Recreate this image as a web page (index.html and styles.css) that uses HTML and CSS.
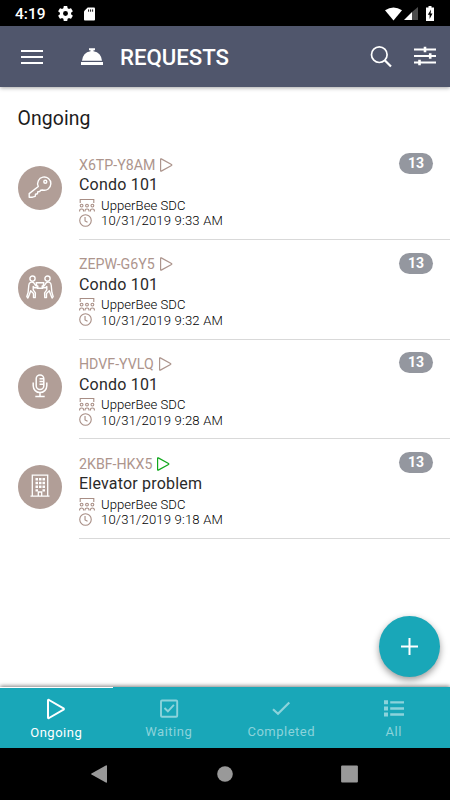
FILE: index.html
```html
<!DOCTYPE html>
<html lang="en">
<head>
    <meta charset="UTF-8">
    <meta name="viewport" content="width=device-width, initial-scale=1.0">
    <title>Requests</title>
    <link rel="stylesheet" href="styles.css">
</head>
<body>

<!-- shared icons -->
<svg class="sprite" aria-hidden="true">
    <symbol id="icon-play" viewBox="0 0 14 14">
        <path d="M1.600 1.300v11.400q0 .7.700.4l10.200-5.600q.7-.5 0-1l-10.200-5.600q-.7-.3-.7.400z" fill="none" stroke="currentColor" stroke-width="1.200"/>
    </symbol>
    <symbol id="icon-group" viewBox="0 0 16 14">
        <g fill="none" stroke="currentColor" stroke-width="1.100">
            <path d="M1.200 5V1.500h13.600V5"/>
            <circle cx="2.600" cy="7.600" r="1.400"/><circle cx="8" cy="7.600" r="1.400"/><circle cx="13.400" cy="7.600" r="1.400"/>
            <path d="M.6 13.500v-.6q0-1.900 2-1.900t2 1.900v.6M6 13.500v-.6q0-1.900 2-1.900t2 1.900v.6M11.400 13.500v-.6q0-1.900 2-1.900t2 1.900v.6"/>
        </g>
    </symbol>
    <symbol id="icon-clock" viewBox="0 0 14 14">
        <g fill="none" stroke="currentColor" stroke-width="1.200"><circle cx="7" cy="7" r="6.200"/><path d="M6.500 3.200v4.300L9.200 9"/></g>
    </symbol>
</svg>

<div class="status-bar">
    <span class="time">4:19</span>
    <svg class="gear" viewBox="2 2 20 20"><path fill="#fff" d="M19.400 13a7.500 7.500 0 0 0 0-2l2.100-1.600a.5.500 0 0 0 .1-.7l-2-3.400a.5.500 0 0 0-.6-.2l-2.500 1a7.500 7.500 0 0 0-1.700-1L14.400 2.400a.5.500 0 0 0-.5-.4h-3.800a.5.500 0 0 0-.5.400l-.4 2.700a7.500 7.500 0 0 0-1.700 1l-2.500-1a.5.500 0 0 0-.6.200l-2 3.400a.5.500 0 0 0 .1.700L4.600 11a7.500 7.500 0 0 0 0 2l-2.100 1.600a.5.500 0 0 0-.1.700l2 3.400c.1.200.4.300.6.200l2.500-1a7.500 7.500 0 0 0 1.700 1l.4 2.700c0 .2.200.4.500.4h3.800c.3 0 .5-.2.500-.4l.4-2.700a7.500 7.500 0 0 0 1.700-1l2.500 1c.2.100.5 0 .6-.2l2-3.400a.5.500 0 0 0-.1-.7zM12 15.300a3.300 3.300 0 1 1 0-6.600 3.300 3.300 0 0 1 0 6.600z"/></svg>
    <svg class="sd" viewBox="0 0 12 14"><path fill="#fff" d="M4 0h7q1 0 1 1v12q0 1-1 1H1q-1 0-1-1V4z"/><path stroke="#000" d="M5 2v2.500M7.200 2v2.500M9.400 2v2.500"/></svg>
    <svg class="wifi" viewBox="0 0 18 14"><path fill="#fff" d="M9 14L0 3Q9-3 18 3z"/></svg>
    <svg class="signal" viewBox="0 0 14 13"><path fill="#fff" d="M0 13L8 5v8z"/><path fill="#4d4d4d" d="M8 5l6-5v13H8z"/></svg>
    <svg class="battery" viewBox="0 0 8 15"><path fill="#fff" d="M2.500 0h3v1.500H8V15H0V1.500h2.500z"/><path fill="#000" d="M5 3.500L1.800 8.700h1.800V13l2.900-5.500H4.600z"/></svg>
</div>

<header>
    <svg class="menu" viewBox="0 0 22 14"><path stroke="#fff" stroke-width="2" d="M0 1h22M0 7h22M0 13h22"/></svg>
    <svg class="bell" viewBox="0 0 22 17"><path fill="#fff" d="M1 12.800Q1.800 4.700 9.500 3.300V2.200H8V.3h6v1.900h-1.500v1.100Q20.200 4.700 21 12.800zM0 14h22v3H0z"/></svg>
    <h1>REQUESTS</h1>
    <svg class="search" viewBox="0 0 22 22"><circle cx="9.300" cy="8.700" r="7.800" fill="none" stroke="#fff" stroke-width="1.700"/><path stroke="#fff" stroke-width="2.200" d="M14.700 14.200l6.300 6.300"/></svg>
    <svg class="filter" viewBox="0 0 22 20"><path stroke="#fff" stroke-width="2" d="M0 3.500h22M0 10h22M0 16.500h22"/><path stroke="#fff" stroke-width="2.600" d="M11 .8v5.400M16.200 7.300v5.400M5.500 13.800v5.400"/></svg>
</header>

<main>
    <h2>Ongoing</h2>

    <div class="request">
        <div class="avatar">
            <svg viewBox="0 0 24 24"><g fill="none" stroke="#fff" stroke-width="1.400" stroke-linejoin="round"><path d="M10.300 11.500A6.600 6.600 0 1 1 14.500 15l-1.800.3-1 1.200-1.900.3-.4 2-1.900.5-.3 2-2.700.9H1.200v-3.600z"/><circle cx="17.300" cy="6.700" r="1.500"/></g></svg>
        </div>
        <div class="info">
            <div class="code">X6TP-Y8AM<svg><use href="#icon-play"/></svg></div>
            <div class="title">Condo 101</div>
            <div class="detail"><svg class="group"><use href="#icon-group"/></svg>UpperBee SDC</div>
            <div class="detail date"><svg class="clock"><use href="#icon-clock"/></svg>10/31/2019 9:33 AM</div>
        </div>
        <span class="badge">13</span>
    </div>

    <div class="request">
        <div class="avatar">
            <svg class="wide" viewBox="0 0 28 24"><g fill="none" stroke="#fff" stroke-width="1.400" stroke-linejoin="round"><circle cx="6.500" cy="3.600" r="2.600"/><circle cx="21.500" cy="3.600" r="2.600"/><path d="M10.200 7.800h7.600l-1 5.400h-5.600zM4.500 7.300q2-.8 3.500.8l1.800 2.700 2 .2v1.600l-3.300.2-1.300-1.300v3.300l2.200 3-.2 4.800H7.500v-4l-2.800-2.800-1.200 3.500-1.600 3.800L.8 21.600l1.300-4.100.7-7.200q.2-2.300 1.700-3z"/><path d="M23.500 7.300q-2-.8-3.500.8l-1.800 2.700-2 .2v1.600l3.300.2 1.300-1.300v3.300l-2.200 3 .2 4.800h1.700v-4l2.800-2.800 1.200 3.500 1.600 3.800 1.100-1.500-1.300-4.100-.7-7.200q-.2-2.300-1.700-3z"/></g></svg>
        </div>
        <div class="info">
            <div class="code">ZEPW-G6Y5<svg><use href="#icon-play"/></svg></div>
            <div class="title">Condo 101</div>
            <div class="detail"><svg class="group"><use href="#icon-group"/></svg>UpperBee SDC</div>
            <div class="detail date"><svg class="clock"><use href="#icon-clock"/></svg>10/31/2019 9:32 AM</div>
        </div>
        <span class="badge">13</span>
    </div>

    <div class="request">
        <div class="avatar">
            <svg viewBox="0 0 24 24"><g fill="none" stroke="#fff" stroke-width="1.500"><rect x="8.200" y="1" width="7.600" height="14.600" rx="3.800"/><path d="M5.200 8.500v3.300a6.800 6.800 0 0 0 13.600 0V8.500M12 18.600v3.700M7.300 22.600h9.400M11.500 4.700h4M11.500 7.500h4M11.500 10.300h4"/></g></svg>
        </div>
        <div class="info">
            <div class="code">HDVF-YVLQ<svg><use href="#icon-play"/></svg></div>
            <div class="title">Condo 101</div>
            <div class="detail"><svg class="group"><use href="#icon-group"/></svg>UpperBee SDC</div>
            <div class="detail date"><svg class="clock"><use href="#icon-clock"/></svg>10/31/2019 9:28 AM</div>
        </div>
        <span class="badge">13</span>
    </div>

    <div class="request">
        <div class="avatar">
            <svg viewBox="0 0 24 24"><path fill="none" stroke="#fff" stroke-width="1.300" d="M4.300 22V1.200h15.400V22M2.500 22.200h19M10.300 22v-4h3.400v4"/><path fill="#fff" d="M7.500 4h2.500v2.500H7.500zM11 4h2.500v2.500H11zM14.500 4H17v2.500h-2.500zM7.500 7.800h2.500v2.500H7.500zM11 7.800h2.500v2.500H11zM14.500 7.800H17v2.500h-2.500zM7.500 11.500h2.500V14H7.500zM11 11.500h2.500V14H11zM14.500 11.500H17V14h-2.500zM7.500 15.200h2.500v2.300H7.500zM14.500 15.200H17v2.300h-2.500z"/></svg>
        </div>
        <div class="info">
            <div class="code">2KBF-HKX5<svg class="green"><use href="#icon-play"/></svg></div>
            <div class="title">Elevator problem</div>
            <div class="detail"><svg class="group"><use href="#icon-group"/></svg>UpperBee SDC</div>
            <div class="detail date"><svg class="clock"><use href="#icon-clock"/></svg>10/31/2019 9:18 AM</div>
        </div>
        <span class="badge">13</span>
    </div>

    <button class="add-btn" aria-label="Add">
        <svg viewBox="0 0 17 17"><path stroke="#fff" stroke-width="2" d="M8.500 0v17M0 8.500h17"/></svg>
    </button>
</main>

<nav class="tabs">
    <a class="tab active">
        <svg viewBox="0 0 20 22"><path fill="none" stroke="currentColor" stroke-width="2" stroke-linejoin="round" d="M2 2.500v17q0 1 1 .5l14.500-8.300q.8-.7 0-1.400L3 2q-1-.5-1 .5z"/></svg>
        <span>Ongoing</span>
    </a>
    <a class="tab">
        <svg viewBox="0 0 20 22"><g fill="none" stroke="currentColor" stroke-width="1.900"><rect x="2" y="2.500" width="16.200" height="16.200" rx="1"/><path d="M5.500 10l3.400 3.300 6-6.500"/></g></svg>
        <span>Waiting</span>
    </a>
    <a class="tab">
        <svg viewBox="0 0 20 22"><path fill="none" stroke="currentColor" stroke-width="2.200" d="M2 11.200l5 4.600L18.300 4.500"/></svg>
        <span>Completed</span>
    </a>
    <a class="tab">
        <svg viewBox="0 0 20 22"><path stroke="currentColor" stroke-width="4" d="M0 4.300h4M0 10.500h4M0 16.500h4"/><path stroke="currentColor" stroke-width="2.300" d="M6.200 4.300H20M6.200 10.500H20M6.200 16.500H20"/></svg>
        <span>All</span>
    </a>
</nav>

<div class="system-nav">
    <svg viewBox="0 0 18 18"><path d="M.5 9.600q-.8-.6 0-1.200L14.800.4Q16 0 16 1v16q0 1-1.200.6z"/></svg>
    <svg viewBox="0 0 18 18"><circle cx="9" cy="9" r="7.800"/></svg>
    <svg viewBox="0 0 18 18"><rect x=".1" y=".6" width="16.800" height="16.800" rx="1"/></svg>
</div>

</body>
</html>
```

FILE: styles.css
```css
* {
    box-sizing: border-box;
}
body {
    display: flex;
    flex-direction: column;
    height: 100vh;
    margin: 0;
    font-family: Roboto, Arial, sans-serif;
    color: #1c1c1c;
    background-color: white;
    overflow: hidden;
}
svg {
    display: block;
    flex: none;
}
.sprite {
    display: none;
}
.status-bar {
    display: flex;
    align-items: center;
    height: 26px;
    padding: 1px 15px 0;
    background-color: black;
    color: white;
}
.time {
    width: 43px;
    font-size: 15.5px;
    font-weight: 500;
}
.gear {
    width: 15px;
    height: 15px;
}
.sd {
    width: 11px;
    height: 14px;
    margin-left: 11px;
}
.wifi {
    width: 17px;
    height: 14px;
    margin-left: auto;
}
.signal {
    width: 14px;
    height: 13px;
    margin-left: 2px;
}
.battery {
    width: 8px;
    height: 15px;
    margin: 0 1px 0 8px;
}
header {
    display: flex;
    align-items: center;
    height: 61px;
    padding: 0 14px 0 21px;
    background-color: #50566c;
    box-shadow: 0 1px 4px rgba(0, 0, 0, 0.35);
    color: white;
    z-index: 1;
}
.menu {
    width: 22px;
    height: 14px;
}
.bell {
    width: 22px;
    height: 17px;
    margin-left: 38px;
}
h1 {
    margin: 1px auto 0 17px;
    font-size: 22.2px;
    font-weight: 500;
}
.search {
    width: 22px;
    height: 22px;
    margin-right: 22px;
}
.filter {
    width: 22px;
    height: 20px;
    margin-top: -1px;
}
main {
    position: relative;
    flex: 1;
}
h2 {
    height: 53.4px;
    margin: 0;
    padding: 20px 17.5px 0;
    font-size: 19.4px;
    font-weight: 400;
    line-height: 24px;
    letter-spacing: 0.1px;
}
.request {
    display: flex;
    height: 99.6px;
    padding-left: 17px;
}
.avatar {
    display: flex;
    align-items: center;
    justify-content: center;
    width: 44px;
    height: 44px;
    margin: 25.6px 17.5px 0 0.5px;
    border-radius: 50%;
    background-color: #b19e97;
}
.avatar svg {
    width: 24px;
    height: 24px;
    margin-top: -2px;
}
.avatar .wide {
    width: 28px;
}
.info {
    flex: 1;
    padding-top: 15px;
    border-bottom: 1px solid #d9d9d9;
}
.code {
    display: flex;
    align-items: center;
    gap: 4px;
    height: 19px;
    color: #ad958d;
    font-size: 14.2px;
}
.code svg {
    width: 14px;
    height: 14px;
}
.code .green {
    color: #12a81e;
}
.title {
    height: 22px;
    font-size: 16px;
    line-height: 22px;
    letter-spacing: 0.2px;
    color: #2a2a2a;
}
.detail {
    display: flex;
    align-items: center;
    height: 16px;
    margin-top: 1px;
    font-size: 13.1px;
    font-weight: 300;
    letter-spacing: 0.05px;
    color: #000;
}
.date {
    height: 15px;
    margin-top: 0;
    letter-spacing: 0.17px;
}
.detail svg {
    color: #a88e85;
    margin-top: -1px;
}
.group {
    width: 16px;
    height: 14px;
    margin-right: 6px;
}
.clock {
    width: 13px;
    height: 13px;
    margin-right: 9px;
}
.badge {
    width: 34px;
    height: 21px;
    margin: 12.6px 17px 0 -51px;
    border-radius: 11px;
    background-color: #94979f;
    color: white;
    font-size: 14px;
    font-weight: 700;
    line-height: 20px;
    text-align: center;
}
.add-btn {
    display: flex;
    align-items: center;
    justify-content: center;
    position: absolute;
    right: 10.5px;
    bottom: 10px;
    width: 61px;
    height: 61px;
    padding: 0;
    border: none;
    border-radius: 50%;
    background-color: #19a7b8;
    box-shadow: 0 3px 7px rgba(0, 0, 0, 0.4);
}
.add-btn svg {
    width: 17px;
    height: 17px;
}
.tabs {
    display: flex;
    height: 61px;
    background-color: #19a7b8;
    box-shadow: 0 -1px 4px rgba(0, 0, 0, 0.5);
    z-index: 1;
}
.tab {
    display: flex;
    flex: 1;
    flex-direction: column;
    align-items: center;
    padding-top: 10px;
    border-top: 1px solid transparent;
    color: #8cd3db;
    font-size: 13px;
    letter-spacing: 0.5px;
}
.tab svg {
    width: 20px;
    height: 22px;
}
.tab span {
    margin-top: 4px;
}
.tab.active {
    border-top-color: white;
    color: white;
}
.tab.active span {
    margin-top: 5px;
}
.system-nav {
    display: flex;
    align-items: center;
    justify-content: space-between;
    height: 52px;
    padding: 0 91px;
    background-color: black;
}
.system-nav svg {
    width: 18px;
    height: 18px;
    fill: #999;
}
```
